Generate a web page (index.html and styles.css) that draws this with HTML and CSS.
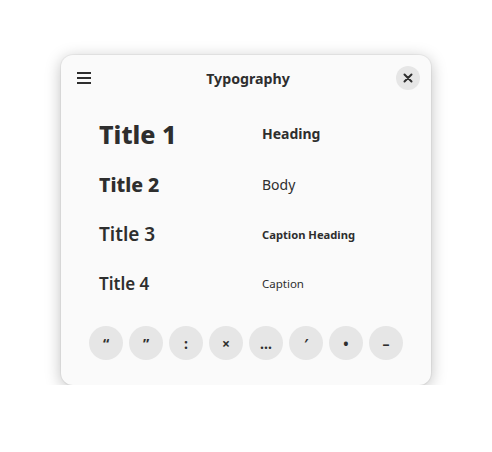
FILE: index.html
```html
<!DOCTYPE html>
<html>
<head>
<meta charset="utf-8">
<link rel="stylesheet" href="styles.css">
</head>
<body>
<div class="window">
  <div class="headerbar">
    <button class="menu-btn" aria-label="Menu">
      <svg width="16" height="16" viewBox="0 0 16 16"><rect x="1" y="2" width="14" height="2" fill="#2e2e2e"/><rect x="1" y="7" width="14" height="2" fill="#2e2e2e"/><rect x="1" y="12" width="14" height="2" fill="#2e2e2e"/></svg>
    </button>
    <div class="title">Typography</div>
    <button class="close-btn" aria-label="Close">
      <svg width="10" height="10" viewBox="0 0 10 10"><path d="M1.5 1.5 L8.5 8.5 M8.5 1.5 L1.5 8.5" stroke="#2e2e2e" stroke-width="2" stroke-linecap="round"/></svg>
    </button>
  </div>
  <div class="grid">
    <div class="cell title-1">Title 1</div>
    <div class="cell heading">Heading</div>
    <div class="cell title-2">Title 2</div>
    <div class="cell body-text">Body</div>
    <div class="cell title-3">Title 3</div>
    <div class="cell caption-heading">Caption Heading</div>
    <div class="cell title-4">Title 4</div>
    <div class="cell caption">Caption</div>
  </div>
  <div class="chars">
    <button class="char">“</button>
    <button class="char">”</button>
    <button class="char">:</button>
    <button class="char">×</button>
    <button class="char">…</button>
    <button class="char">′</button>
    <button class="char">•</button>
    <button class="char">–</button>
  </div>
</div>
</body>
</html>
```
FILE: styles.css
```css
* { box-sizing: border-box; }
html, body { margin: 0; padding: 0; background: #ffffff; }
body {
  padding: 55px 0 0 61px;
  font-family: "Noto Sans", "Open Sans", sans-serif;
  color: #2e2e2e;
}
.window {
  width: 370px;
  height: 330px;
  background: #fafafa;
  border-radius: 12px;
  box-shadow: 0 3px 16px rgba(0,0,0,0.26), 0 0 0 1px rgba(0,0,0,0.04);
  display: flex;
  flex-direction: column;
}
.headerbar {
  height: 46px;
  display: flex;
  align-items: center;
  justify-content: space-between;
  padding: 0 11px 0 15px;
}
button {
  border: none;
  font-family: inherit;
  color: inherit;
  padding: 0;
  cursor: pointer;
}
.menu-btn {
  width: 16px;
  height: 16px;
  background: transparent;
  display: flex;
}
.title {
  font-size: 14.2px;
  font-weight: 700;
  margin-left: 8px;
}
.close-btn {
  width: 24px;
  height: 24px;
  border-radius: 50%;
  background: #e6e6e6;
  display: flex;
  align-items: center;
  justify-content: center;
}
.grid {
  display: grid;
  grid-template-columns: 163px 1fr;
  grid-template-rows: 50px 51px 49px 49px;
  padding: 8px 0 0 38px;
  align-items: center;
}
.cell { white-space: nowrap; line-height: 1; }
.title-1 { font-size: 25px; font-weight: 800; }
.title-2 { font-size: 19.5px; font-weight: 800; }
.title-3 { font-size: 19px; font-weight: 600; }
.title-4 { font-size: 17px; font-weight: 600; }
.heading { font-size: 14px; font-weight: 700; }
.body-text { font-size: 14px; font-weight: 400; }
.caption-heading { font-size: 11.2px; font-weight: 700; }
.caption { font-size: 11.5px; font-weight: 400; }
.chars {
  margin-top: 18px;
  display: flex;
  justify-content: center;
  gap: 6px;
}
.char {
  width: 34px;
  height: 34px;
  border-radius: 50%;
  background: #e6e6e6;
  font-size: 14px;
  font-weight: 700;
  display: flex;
  align-items: center;
  justify-content: center;
}
```
